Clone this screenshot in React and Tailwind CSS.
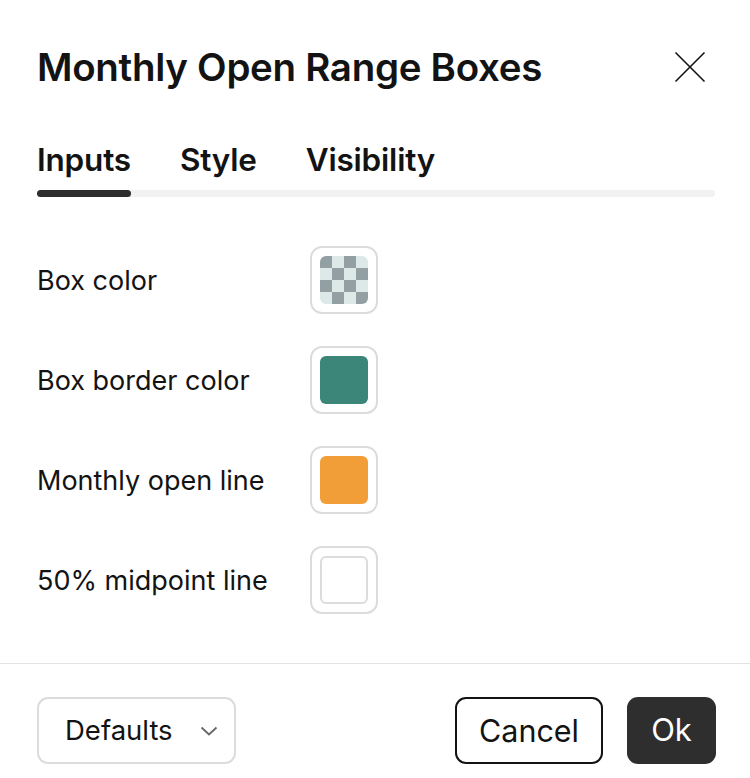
import { useState } from "react";

const rows = [
  { label: "Box color", kind: "checker" },
  { label: "Box border color", kind: "fill", color: "bg-[#3b8679]" },
  { label: "Monthly open line", kind: "fill", color: "bg-[#f19e38]" },
  { label: "50% midpoint line", kind: "empty" },
];

function Swatch({ row }) {
  return (
    <button className="w-[68px] h-[68px] rounded-[12px] border-2 border-[#dcdcdc] bg-white flex items-center justify-center">
      {row.kind === "checker" && (
        <div className="w-[48px] h-[48px] rounded-[6px] overflow-hidden grid grid-cols-4 grid-rows-4">
          {Array.from({ length: 16 }).map((_, i) => {
            const dark = (Math.floor(i / 4) + (i % 4)) % 2 === 0;
            return <div key={i} className={dark ? "bg-[#93a0a3]" : "bg-[#dde9e8]"} />;
          })}
        </div>
      )}
      {row.kind === "fill" && <div className={`w-[48px] h-[48px] rounded-[6px] ${row.color}`} />}
      {row.kind === "empty" && <div className="w-[48px] h-[48px] rounded-[6px] border-2 border-[#dcdcdc]" />}
    </button>
  );
}

export default function App() {
  const [tab, setTab] = useState("Inputs");

  return (
    <div className="w-[750px] h-[778px] bg-white text-[#131313] font-['Inter','Liberation_Sans',sans-serif] flex flex-col">
      <div className="flex items-center justify-between pl-[37px] pr-[35px] pt-[42px]">
        <h1 className="text-[38.5px] leading-[50px] font-semibold tracking-[-0.3px]">Monthly Open Range Boxes</h1>
        <button className="w-[44px] h-[44px] flex items-center justify-center mr-[3px]">
          <svg width="32" height="32" viewBox="0 0 32 32" fill="none" stroke="#131313" strokeWidth="1.6">
            <path d="M1.5 1.5 L30.5 30.5 M30.5 1.5 L1.5 30.5" />
          </svg>
        </button>
      </div>

      <div className="pl-[37px] pr-[35px] mt-[48px]">
        <div className="flex gap-[49px]">
          {["Inputs", "Style", "Visibility"].map((t) => (
            <button key={t} onClick={() => setTab(t)} className="text-[31.5px] leading-[40px] font-semibold tracking-[-0.2px]">
              {t}
            </button>
          ))}
        </div>
        <div className="mt-[10px] h-[7px] rounded-full bg-[#f2f2f2] relative">
          <div className="absolute left-0 top-0 h-[7px] w-[94px] rounded-full bg-[#2e2e2e]" />
        </div>
      </div>

      <div className="pl-[37px] pt-[49px] flex flex-col gap-[32px]">
        {rows.map((r) => (
          <div key={r.label} className="flex items-center">
            <div className="w-[273px] text-[27px] leading-[34px] pt-[2px]">{r.label}</div>
            <Swatch row={r} />
          </div>
        ))}
      </div>

      <div className="mt-auto border-t border-[#e3e3e3] flex items-center justify-between pl-[37px] pr-[34px] pt-[33px] pb-[14px]">
        <button className="w-[199px] h-[67px] rounded-[11px] border-2 border-[#dcdcdc] flex items-center justify-between pl-[26px] pr-[15px] text-[27.5px]">
          <span>Defaults</span>
          <svg width="20" height="20" viewBox="0 0 20 20" fill="none" stroke="#666" strokeWidth="1.8">
            <path d="M2.5 6.5 L10 13.5 L17.5 6.5" />
          </svg>
        </button>
        <div className="flex gap-[24px]">
          <button className="w-[148px] h-[67px] rounded-[11px] border-2 border-[#131313] text-[30.5px]">Cancel</button>
          <button className="w-[89px] h-[67px] rounded-[11px] bg-[#2e2e2e] text-white text-[31px]">Ok</button>
        </div>
      </div>
    </div>
  );
}
